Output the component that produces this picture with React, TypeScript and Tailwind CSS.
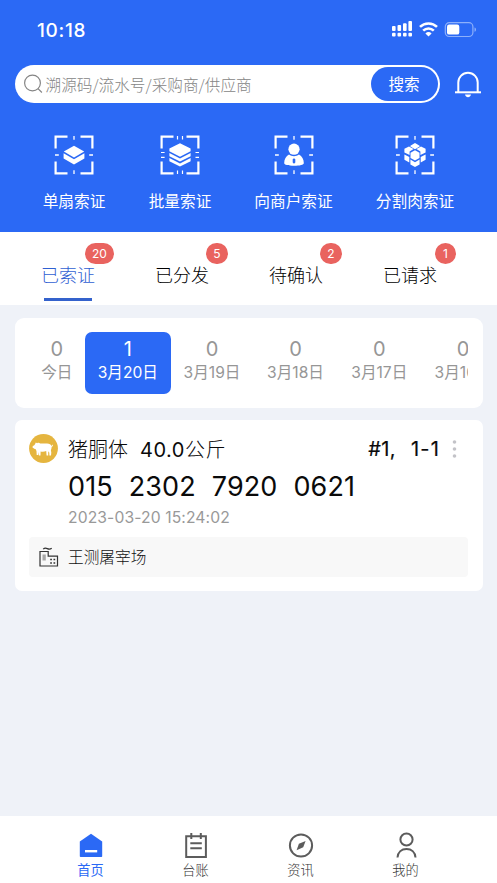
import React, { useState } from 'react';

type ScanKind = 'single' | 'batch' | 'merchant' | 'split';

const actions: { kind: ScanKind; label: string; width: string }[] = [
  { kind: 'single', label: '单扇索证', width: 'w-[106px]' },
  { kind: 'batch', label: '批量索证', width: 'w-[106px]' },
  { kind: 'merchant', label: '向商户索证', width: 'w-[121px]' },
  { kind: 'split', label: '分割肉索证', width: 'w-[122px]' },
];

const tabs = [
  { label: '已索证', count: 20, badge: 'left-[44px] w-[29px]' },
  { label: '已分发', count: 5, badge: 'left-[51px] w-[22px]' },
  { label: '待确认', count: 2, badge: 'left-[51px] w-[22px]' },
  { label: '已请求', count: 1, badge: 'left-[52px] w-[21px]' },
];

const days = [
  { label: '今日', count: 0, width: 'w-[56.5px]' },
  { label: '3月20日', count: 1, width: 'w-[85.5px]' },
  { label: '3月19日', count: 0, width: 'w-[83px]' },
  { label: '3月18日', count: 0, width: 'w-[84px]' },
  { label: '3月17日', count: 0, width: 'w-[83.5px]' },
  { label: '3月16日', count: 0, width: 'w-[84px]' },
];

function StatusIcons() {
  return (
    <svg className="w-[86px] h-5" viewBox="0 0 86 20" fill="none">
      <g fill="#fff">
        <rect x="0" y="6" width="3.6" height="5" rx="1" />
        <rect x="5.5" y="5" width="3.6" height="6" rx="1" />
        <rect x="11" y="3.2" width="3.6" height="7.8" rx="1" />
        <rect x="16.4" y="1" width="3.6" height="10" rx="1" />
        <rect x="0" y="12.8" width="3.6" height="3.8" rx="1" />
        <rect x="5.5" y="12.8" width="3.6" height="3.8" rx="1" />
        <rect x="11" y="12.8" width="3.6" height="3.8" rx="1" />
        <rect x="16.4" y="12.8" width="3.6" height="3.8" rx="1" />
      </g>
      <path d="M28 6.9a12.2 12.2 0 0 1 17 0M31.2 10.6a7.6 7.6 0 0 1 10.6 0" stroke="#fff" strokeWidth="2.6" />
      <path d="M33.4 13.4a4.6 4.6 0 0 1 6.2 0l-3.1 3.2z" fill="#fff" />
      <rect x="53.3" y="2.7" width="27.6" height="13.8" rx="4" stroke="#8db0fb" strokeWidth="1.2" />
      <rect x="55" y="4.6" width="12.3" height="10" rx="2.2" fill="#fff" />
      <path d="M82.5 7.6c2 .5 2 3.7 0 4.2z" fill="#8db0fb" />
    </svg>
  );
}

function ScanIcon({ kind }: { kind: ScanKind }) {
  return (
    <svg className="w-10 h-10" viewBox="0 0 40 40" fill="none">
      <path
        d="M1.6 13.5V1.6h11.9M26.5 1.6h11.9v11.9M38.4 26.5v11.9H26.5M13.5 38.4H1.6V26.5"
        stroke="#fff"
        strokeWidth="2.2"
      />
      {kind === 'batch' ? (
        <path
          d="M17.5 1v3.6M22.5 1v3.6M17.5 35.5V39M22.5 35.5V39M1 17.5h3.6M1 22.3h3.6M35.5 17.5H39M35.5 22.3H39"
          stroke="#fff"
          strokeWidth="1.2"
        />
      ) : (
        <path d="M20 1v3.8M20 35.2V39M1 20h3.8M35.2 20H39" stroke="#fff" strokeWidth="1.3" />
      )}
      {kind === 'single' && (
        <g fill="#fff">
          <path d="M20 10.8 30.2 16.6 20 22.4 9.8 16.6z" />
          <path d="M9.6 18.2 20 24.2l10.4-6v5.2L20 29.4 9.6 23.4z" />
        </g>
      )}
      {kind === 'batch' && (
        <g fill="#fff">
          <path d="M20 8.2 30.6 13.6v2.6L20 21.8 9.4 16.2v-2.6z" />
          <path d="M9.4 18 20 23.6 30.6 18v3.2L20 26.6 9.4 21.2z" />
          <path d="M9.4 23 20 28.4 30.6 23v3.2L20 31.4 9.4 26.2z" />
        </g>
      )}
      {kind === 'merchant' && (
        <g fill="#fff">
          <circle cx="20" cy="14.2" r="5.6" />
          <path d="M15 19.6c3 2.2 7 2.2 10 0 3 1.7 4.8 4.8 4.8 8.4 0 1.8-4 2.8-9.800 2.800s-9.800-1-9.800-2.800c0-3.600 1.800-6.700 4.800-8.400z" />
          <path d="M20 23.200l1.300 1v3.400L20 28.800l-1.300-1.200v-3.400z" fill="#2b69f5" />
        </g>
      )}
      {kind === 'split' && (
        <g fill="#fff">
          <path d="M20 8l4.600 2.700v.8L20 14.200l-4.600-2.700v-.8z" />
          <path d="M14 11.400l4.600 2.700-4 2.500v3.400L9.400 17.400v-3.600z" />
          <path d="M26 11.400l-4.600 2.700 4 2.500v3.400l5.200-2.600v-3.600z" />
          <path d="M20 15.200l4.500 2.600v5.300L20 25.600l-4.500-2.500v-5.300z" />
          <path d="M9.400 19.400l4.900 2.600v5.600l-4.900-2.800zM30.600 19.400L25.700 22v5.600l4.900-2.800z" />
          <path d="M15.400 24.600l4.600 2.600 4.600-2.600v4.800L20 32l-4.600-2.600z" />
        </g>
      )}
    </svg>
  );
}

function PigIcon() {
  return (
    <svg className="w-[29px] h-[29px]" viewBox="0 0 29 29">
      <circle cx="14.5" cy="14.5" r="14.4" fill="#e5b53f" />
      <path
        fill="#fff"
        d="M6.8 8.4 8.2 9.2C9.200 8.500 10.200 8.700 11.200 9.400C13 9.700 15.500 9.300 18 9.400C20.500 9.500 22 10.400 22.500 11.900C23 11.900 23.200 11.500 23.200 10.800L23.900 10.800C24 12 23.500 12.700 22.700 12.800C22.700 14.200 22.300 15.200 21.900 16.200L22.300 18.500L22 21.600H20.400L20.300 18.700L19.500 17.300L19.200 18.800V21.600H17.600L17.200 17.100C15.500 17.700 13.200 17.800 11.600 17.400L11.500 21.600H9.900L9.500 18L9.200 20.900H7.700L7.500 17.200L6.800 15.300C6 15.200 5.300 14.800 4.800 14.200L3.700 13.900V12.100L5 11.500L6 10.300z"
      />
    </svg>
  );
}

function FactoryIcon() {
  return (
    <svg className="w-5 h-5" viewBox="0 0 20 20" fill="none" stroke="#333" strokeWidth="1.2">
      <path d="M1 4.500h8.200v4.700h9.300V19H1z" />
      <path d="M4.200 2.200c1.500-1.600 2.800-1.200 4.100-.6 1.500.7 2.800.9 4.400-.4" />
      <path d="M3.500 7.500h3.300v6H3.500z" fill="#a8a8a8" stroke="none" />
      <path d="M11.200 12.500h1.700M14.500 12.500h1.700M11.200 16h1.700M14.500 16h1.700" strokeWidth="1.700" />
    </svg>
  );
}

function NavIcon({ name }: { name: string }) {
  return (
    <svg className="w-[26px] h-[26px]" viewBox="0 0 26 26" fill="none" stroke="#5c5c5c" strokeWidth="2">
      {name === '首页' && (
        <>
          <path d="M13 1.800 24.200 9.600v14.600c0 .5-.3.800-.8.800H2.600c-.5 0-.8-.3-.8-.8V9.600z" fill="#2b69f5" stroke="none" />
          <path d="M7 19.200h12.200" stroke="#fff" strokeWidth="2.400" />
        </>
      )}
      {name === '台账' && <path d="M3.200 4.200h19.700v20.700H3.200zM8.300 1v6M17.800 1v6M7.300 11.200h11.500M7.300 16.200h11.500" />}
      {name === '资讯' && (
        <>
          <circle cx="13" cy="13.500" r="11.100" />
          <path d="M17.600 8.900l-2.400 6.400-6.600 3 2.300-6.500z" fill="#5c5c5c" stroke="none" />
        </>
      )}
      {name === '我的' && (
        <>
          <circle cx="13.500" cy="7.500" r="6.100" />
          <path d="M4.500 25.500c.3-5.500 4.200-8.600 9-8.600s8.700 3.100 9 8.600" />
        </>
      )}
    </svg>
  );
}

export default function App() {
  const [tab, setTab] = useState(0);
  const [day, setDay] = useState(1);
  const [nav, setNav] = useState('首页');

  return (
    <div className="w-[497px] h-[883px] flex flex-col overflow-hidden bg-[#eff2f8] font-['Inter','Noto_Sans_CJK_SC',sans-serif] whitespace-nowrap">
      <header className="h-[232px] shrink-0 bg-[#2b69f5] text-white">
        <div className="h-[65px] pt-[20px] pl-[37px] pr-[19px] flex justify-between items-start">
          <span className="text-[19px] leading-[21px] font-medium tracking-[0.7px]">10:18</span>
          <StatusIcons />
        </div>

        <div className="flex items-center pl-[14.5px] pr-[15px] h-[38px]">
          <div className="w-[425px] h-[38px] rounded-full bg-white flex items-center pl-[8px] pr-[2px]">
            <svg className="w-[20px] h-[20px]" viewBox="0 0 20 20" fill="none" stroke="#858585" strokeWidth="1.2">
              <circle cx="9.5" cy="9" r="7.9" />
              <path d="M15 14.6l3.9 3.9" />
            </svg>
            <span className="ml-[3px] pt-px flex-1 text-[15.65px] leading-6 font-light text-[#858585] font-['Noto_Sans_CJK_SC',sans-serif]">
              溯源码/流水号/采购商/供应商
            </span>
            <button className="w-[67px] h-[34px] pt-[2px] rounded-full bg-[#2b69f5] text-[15.6px] leading-6">搜索</button>
          </div>
          <svg className="ml-auto w-7 h-7" viewBox="0 0 28 28" fill="none" stroke="#fff" strokeWidth="2">
            <path d="M4.3 22V12.5a9.7 9.7 0 0 1 19.4 0V22" />
            <path d="M1 22.3h26" />
            <path d="M11 24.5h6c-.5 1.9-1.6 2.7-3 2.7s-2.5-.8-3-2.7z" fill="#fff" stroke="none" />
          </svg>
        </div>

        <div className="flex pl-[21px] pt-[32px]">
          {actions.map((a) => (
            <button key={a.kind} className={`flex flex-col items-center ${a.width}`}>
              <ScanIcon kind={a.kind} />
              <span className="mt-[15px] text-[15.7px] leading-6">{a.label}</span>
            </button>
          ))}
        </div>
      </header>

      <nav className="h-[73px] shrink-0 bg-white flex pl-[11px]">
        {tabs.map((t, i) => (
          <button key={t.label} onClick={() => setTab(i)} className="w-[114px] flex flex-col items-center pt-[31px]">
            <span className={`relative text-[18px] leading-[26px] font-light ${tab === i ? 'text-[#2f60d2]' : 'text-[#000]'}`}>
              {t.label}
              <span className={`absolute -top-[20px] h-[21px] rounded-full bg-[#e9635f] text-white text-[12px] leading-[21px] font-normal text-center ${t.badge}`}>
                {t.count}
              </span>
            </span>
            {tab === i && <span className="mt-[9px] w-12 h-[3px] bg-[#3462cc]" />}
          </button>
        ))}
      </nav>

      <section className="mt-[13px] mx-[14.5px] h-[90px] shrink-0 rounded-[9px] bg-white pl-[14px] pr-[14.5px] pt-[14px]">
        <div className="flex overflow-hidden">
          {days.map((d, i) => (
            <button
              key={d.label}
              onClick={() => setDay(i)}
              className={`shrink-0 h-[62px] rounded-[7px] flex flex-col items-center pt-[5px] ${d.width} ${day === i ? 'bg-[#2b69f5] text-white' : 'text-[#969696]'}`}
            >
              <span className="text-[20px] leading-[25px]">{d.count}</span>
              <span className="text-[15.6px] leading-[21px]">{d.label}</span>
            </button>
          ))}
        </div>
      </section>

      <section className="mt-[12px] mx-[14.5px] h-[171px] shrink-0 rounded-[7px] bg-white px-[14.5px] pt-[14px] text-[#0a0a0a]">
        <div className="flex items-center h-[29px]">
          <PigIcon />
          <span className="ml-[10px] pt-[3px] text-[20px] leading-[29px] font-light">猪胴体</span>
          <span className="ml-[12px] pt-[3px] text-[20px] leading-[29px] tracking-[0.5px]">
            40.0<span className="font-light">公斤</span>
          </span>
          <span className="ml-auto pt-[2px] text-[20px] leading-[29px] tracking-[0.4px] [-webkit-text-stroke:0.2px]">#1,</span>
          <span className="ml-[15px] pt-[2px] text-[20px] leading-[29px] tracking-[1.2px] [-webkit-text-stroke:0.2px]">1-1</span>
          <svg className="ml-[12px] mr-[11px] w-[5px] h-[20px]" viewBox="0 0 5 20" fill="#c3c3c8">
            <circle cx="2.5" cy="3" r="1.8" />
            <circle cx="2.5" cy="10" r="1.8" />
            <circle cx="2.5" cy="17" r="1.8" />
          </svg>
        </div>
        <div className="ml-[39px] mt-[8px] flex gap-[16px] text-[27px] leading-8 tracking-[0.1px]">
          <span>015</span>
          <span>2302</span>
          <span>7920</span>
          <span>0621</span>
        </div>
        <div className="ml-[39px] mt-[5px] text-[15.7px] leading-5 tracking-[0.1px] text-[#999]">2023-03-20 15:24:02</div>
        <div className="mt-[9px] h-10 rounded-[4px] bg-[#f8f8f8] flex items-center pl-[10px]">
          <FactoryIcon />
          <span className="ml-[9px] pt-[2px] text-[15.7px] leading-6 font-light text-[#111]">王测屠宰场</span>
        </div>
      </section>

      <footer className="mt-auto h-[67px] shrink-0 bg-white flex pl-[38px]">
        {['首页', '台账', '资讯', '我的'].map((n) => (
          <button
            key={n}
            onClick={() => setNav(n)}
            className={`w-[105px] flex flex-col items-center pt-[16px] text-[13.2px] leading-5 ${nav === n ? 'text-[#2b69f5]' : 'font-light text-[#333]'}`}
          >
            <NavIcon name={n} />
            <span className="mt-[2px]">{n}</span>
          </button>
        ))}
      </footer>
    </div>
  );
}
